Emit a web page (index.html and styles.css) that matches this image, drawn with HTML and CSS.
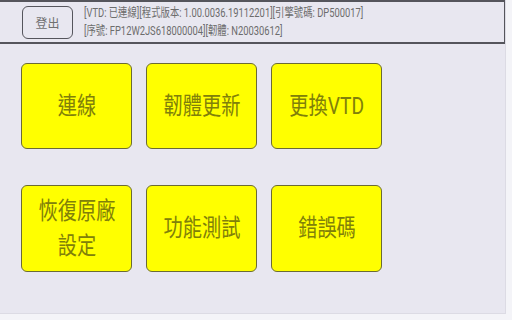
FILE: index.html
```html
<!DOCTYPE html>
<html lang="zh-Hant">
  <head>
    <meta charset="UTF-8" />
    <title>VTD</title>
    <link rel="stylesheet" href="styles.css">
  </head>
  <body>
    <div class="screen">
      <div class="header">
        <button class="logout">登出</button>
        <div class="info">
          <div class="info-line"><span>[VTD: 已連線][程式版本: 1.00.0036.19112201][引擎號碼: DP500017]</span></div>
          <div class="info-line"><span>[序號: FP12W2JS618000004][韌體: N20030612]</span></div>
        </div>
      </div>
      <div class="menu">
        <div class="tile"><span>連線</span></div>
        <div class="tile"><span>韌體更新</span></div>
        <div class="tile"><span>更換VTD</span></div>
        <div class="tile"><span>恢復原廠<br>設定</span></div>
        <div class="tile"><span>功能測試</span></div>
        <div class="tile"><span>錯誤碼</span></div>
      </div>
    </div>
  </body>
</html>
```

FILE: styles.css
```css
html,
body {
  margin: 0;
  height: 100%;
}
body {
  background-color: #f4f4f8;
  font-family: Roboto, "Noto Sans CJK TC", sans-serif;
  overflow: hidden;
}
.screen {
  width: 506px;
  height: 314px;
  background-color: #e8e7f0;
  border-right: 1px solid #dcdbe4;
  border-bottom: 1px solid #dcdbe4;
  box-sizing: border-box;
}
.header {
  height: 44px;
  box-sizing: border-box;
  border-top: 2px solid #55555c;
  border-bottom: 2px solid #55555c;
  border-right: 1px solid #55555c;
  display: flex;
  align-items: center;
  padding-left: 22px;
}
.logout {
  width: 51px;
  height: 33px;
  margin-top: 1px;
  border: 1px solid #55555c;
  border-radius: 6px;
  background: transparent;
  color: #707070;
  font-family: "Noto Sans CJK TC", sans-serif;
  font-size: 12px;
  padding: 0;
}
.info {
  margin-left: 11px;
  color: #6c6c6c;
  font-size: 12px;
  line-height: 18px;
}
.info-line span {
  display: inline-block;
  transform: scaleX(0.78);
  transform-origin: left center;
  white-space: nowrap;
}
.menu {
  display: grid;
  grid-template-columns: repeat(3, 111px);
  grid-template-rows: 86px 87px;
  column-gap: 14px;
  row-gap: 36px;
  padding: 19px 0 0 21px;
}
.tile {
  background-color: #ffff00;
  border: 1px solid #6b6b34;
  border-radius: 6px;
  display: flex;
  align-items: center;
  justify-content: center;
  text-align: center;
  color: #80800a;
  font-size: 24px;
  line-height: 35px;
}
.tile span {
  display: inline-block;
  transform: scaleX(0.8);
  white-space: nowrap;
}
```
